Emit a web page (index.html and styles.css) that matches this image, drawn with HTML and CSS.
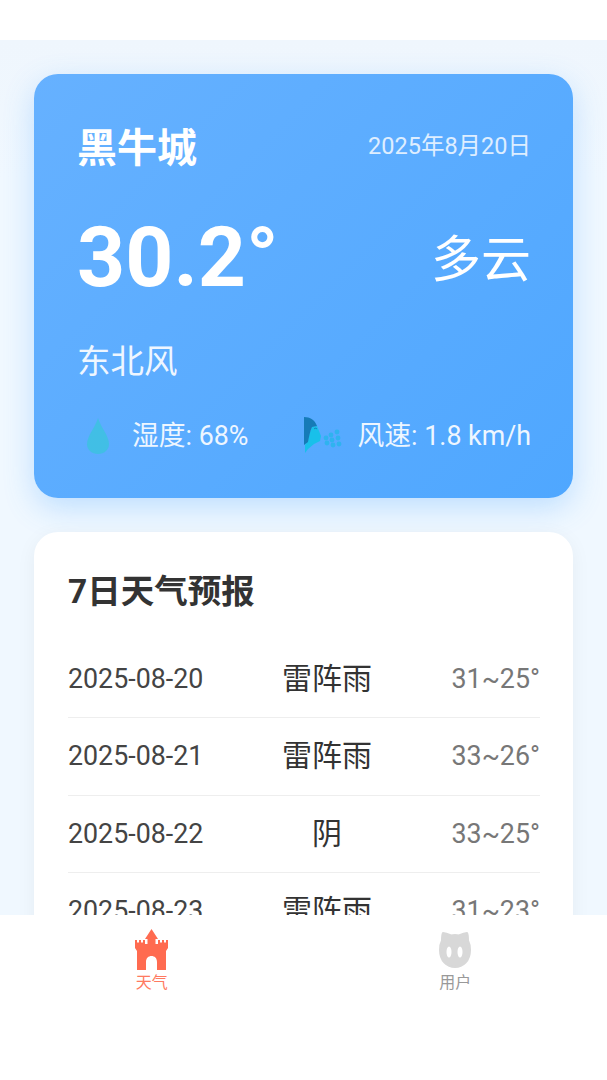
FILE: index.html
```html
<!DOCTYPE html>
<html lang="zh">
<head>
  <meta charset="UTF-8">
  <title>天气</title>
  <link rel="stylesheet" href="styles.css">
</head>
<body>
<div class="status-bar"></div>

<div class="content">
  <!-- 当前天气 -->
  <div class="weather-card">
    <div class="card-top">
      <div class="city">黑牛城</div>
      <div class="date">2025年8月20日</div>
    </div>
    <div class="card-main">
      <div class="temp">30.2°</div>
      <div class="condition">多云</div>
    </div>
    <div class="wind-dir">东北风</div>
    <div class="card-stats">
      <div class="stat">
        <svg class="icon-drop" width="22" height="36" viewBox="0 0 22 36">
          <path d="M11 0C9 8 0 18 0 26c0 6 5 10 11 10s11-4 11-10C22 18 13 8 11 0z" fill="#3fc1e3"/>
        </svg>
        <span>湿度: 68%</span>
      </div>
      <div class="stat">
        <svg class="icon-wind" width="40" height="36" viewBox="0 0 40 36">
          <path d="M13 9l2 5 2 5-1 5-6 3-6 5-3 4v-8l3-4c1-6 2-10 4-14z" fill="#12c3e8"/>
          <path d="M0 0c6 0 11 3 13 9l-5 1C6 14 5 20 4 25l-4 3z" fill="#0f76b0"/>
          <path d="M10 12c1-1 2-1 3 0" fill="none" stroke="#0f76b0" stroke-width="1"/>
          <g fill="#2bb5ee">
            <circle cx="22" cy="21" r="2.400"/><circle cx="27" cy="18" r="2.400"/><circle cx="33" cy="15" r="2.400"/>
            <circle cx="28" cy="23" r="2.400"/><circle cx="34" cy="21" r="2.400"/><circle cx="23" cy="26" r="2.400"/>
            <circle cx="29" cy="28" r="2.400"/><circle cx="35" cy="27" r="2.400"/>
          </g>
        </svg>
        <span>风速: 1.8 km/h</span>
      </div>
    </div>
  </div>

  <!-- 7日预报 -->
  <div class="forecast-card">
    <h2>7日天气预报</h2>
    <div class="forecast-row">
      <span class="f-date">2025-08-20</span>
      <span class="f-text">雷阵雨</span>
      <span class="f-temp">31~25°</span>
    </div>
    <div class="forecast-row">
      <span class="f-date">2025-08-21</span>
      <span class="f-text">雷阵雨</span>
      <span class="f-temp">33~26°</span>
    </div>
    <div class="forecast-row">
      <span class="f-date">2025-08-22</span>
      <span class="f-text">阴</span>
      <span class="f-temp">33~25°</span>
    </div>
    <div class="forecast-row">
      <span class="f-date">2025-08-23</span>
      <span class="f-text">雷阵雨</span>
      <span class="f-temp">31~23°</span>
    </div>
  </div>
</div>

<!-- 底部导航 -->
<div class="tab-bar">
  <div class="tab tab-active">
    <svg width="34" height="41" viewBox="0 0 34 41">
      <path fill="#ff6b50" d="M16.500 0L23 10h-2.500v5H23v-4h2v2.500h2V11h2v2.500h2V11h2v8l-2 3v19h-9v-8c0-4-2.500-6-5.500-6S11 29 11 33v8H2V22l-2-3v-8h2v2.500h2V11h2v2.500h2V11h2v4h2.500v-5H10z"/>
    </svg>
    <span>天气</span>
  </div>
  <div class="tab">
    <svg class="icon-user" width="32" height="38" viewBox="0 0 32 38">
      <path fill="#d8d8d8" stroke="#d8d8d8" stroke-width="2" stroke-linejoin="round" d="M4 3c3 0 6 1.500 8 2.500 3-.8 5-.8 8 0 2-1 5-2.500 8-2.500 1 2 1 5 1 7.500 1.500 3 2 6 2 9.500 0 11-7 17-15 17S1 31 1 20c0-3.500.5-6.500 2-9.500C3 8 3 5 4 3z"/>
      <ellipse cx="10" cy="22" rx="2.500" ry="5.500" fill="white"/>
      <ellipse cx="21" cy="22" rx="2.500" ry="5.500" fill="white"/>
    </svg>
    <span>用户</span>
  </div>
</div>
</body>
</html>
```

FILE: styles.css
```css
* {
  box-sizing: border-box;
}

html, body {
  height: 100%;
}

body {
  margin: 0;
  display: flex;
  flex-direction: column;
  height: 1080px;
  overflow: hidden;
  background-color: white;
  font-family: Roboto, "Noto Sans CJK SC", sans-serif;
}

.status-bar {
  height: 40px;
  flex: none;
  background-color: white;
}

.content {
  height: 875px;
  flex: none;
  overflow: hidden;
  padding: 34px 34px 0;
  background: linear-gradient(to bottom, #eff6fd, #f0f8ff 140px);
}

.weather-card {
  height: 424px;
  padding: 44px 42px 0 43px;
  border-radius: 24px;
  background: linear-gradient(135deg, #66b1ff, #4fa7ff);
  box-shadow: 0 10px 30px rgba(77, 166, 255, 0.3);
  color: white;
}

.card-top {
  display: flex;
  justify-content: space-between;
  align-items: center;
  height: 54px;
}

.city {
  font-size: 40px;
  font-weight: bold;
}

.date {
  margin-bottom: 2px;
  font-size: 23.5px;
  opacity: 0.8;
}

.card-main {
  display: flex;
  justify-content: space-between;
  align-items: center;
  height: 104px;
  margin-top: 33px;
}

.temp {
  font-size: 84px;
  font-weight: bold;
}

.condition {
  margin-bottom: 4px;
  font-size: 50px;
}

.wind-dir {
  margin-top: 29px;
  font-size: 33.5px;
  line-height: 48px;
  opacity: 0.9;
}

.card-stats {
  display: flex;
  justify-content: space-between;
  margin-top: 26px;
}

.stat {
  display: flex;
  align-items: center;
  font-size: 26.8px;
  opacity: 0.9;
}

.icon-drop {
  margin: 6px 23px 0 10px;
}

.icon-wind {
  margin: 4px 14px 0 0;
}

.forecast-card {
  margin-top: 34px;
  padding: 35px 33px 0 34px;
  height: 500px;
  border-radius: 24px;
  background-color: white;
  box-shadow: 0 4px 20px rgba(0, 0, 0, 0.05);
}

.forecast-card h2 {
  margin: 0 0 23.5px;
  font-size: 33.5px;
  line-height: 50px;
  color: #333333;
}

.forecast-row {
  display: flex;
  align-items: center;
  height: 77.5px;
  border-bottom: 1px solid #eeeeee;
  font-size: 26.8px;
}

.f-date {
  width: 200px;
  color: #444444;
}

.f-text {
  width: 118px;
  margin-bottom: 6px;
  text-align: center;
  white-space: nowrap;
  font-size: 30px;
  color: #333333;
}

.f-temp {
  flex: 1;
  text-align: right;
  color: #777777;
}

.tab-bar {
  flex: 1;
  display: flex;
  background-color: white;
}

.tab {
  width: 50%;
  display: flex;
  flex-direction: column;
  align-items: center;
  padding-top: 14px;
  font-size: 16px;
  line-height: 24px;
  color: #999999;
}

.tab svg {
  display: block;
  margin-bottom: 1px;
}

.tab .icon-user {
  margin: 1px 0 3px;
}

.tab-active {
  color: #ff7a60;
}
```
